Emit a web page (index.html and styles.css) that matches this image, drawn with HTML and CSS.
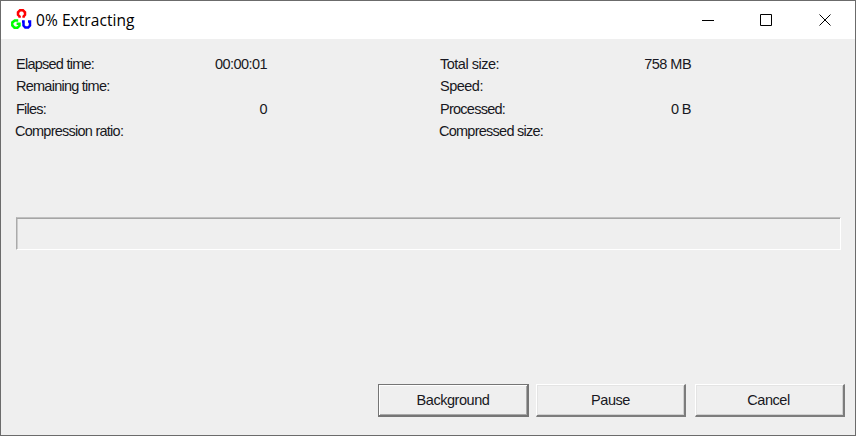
FILE: index.html
```html
<!DOCTYPE html>
<html lang="en">
<head>
<meta charset="utf-8">
<title>0% Extracting</title>
<link rel="stylesheet" href="styles.css">
</head>
<body>
<div class="window">
  <header class="titlebar">
    <svg class="logo" width="22" height="22" viewBox="0 0 22 22" fill="none" stroke-width="2.500">
      <path stroke="#f00" d="M9.600 8.800V7.400L8 5.800V3.300L10 1.300H13L15 3.300V5.800L13.600 7.400V8.800"/>
      <path stroke="#0f0" d="M8.200 11.400H4.800L2.300 13.400V16.500L4.500 18.700H7.500L9.500 16.800V14.800H6.600"/>
      <path stroke="#00f" d="M12 12.500H13.500V16.600L15.300 18.600H18.200L20 16.600V12.500H18"/>
    </svg>
    <span class="title">0% Extracting</span>
    <svg class="controls" width="130" height="13" viewBox="0 0 130 13" fill="none" stroke="#000" stroke-width="1">
      <path d="M0 6.500H12M58.500 .5H69.500V11.500H58.500Z"/>
      <path d="M117.500 .5L128.500 11.500M128.500 .5L117.500 11.500"/>
    </svg>
  </header>
  <main class="content">
    <section class="stats">
      <dl class="column">
        <div class="row"><dt>Elapsed time:</dt><dd>00:00:01</dd></div>
        <div class="row"><dt>Remaining time:</dt><dd></dd></div>
        <div class="row"><dt>Files:</dt><dd>0</dd></div>
        <div class="row"><dt class="wide">Compression ratio:</dt><dd></dd></div>
      </dl>
      <dl class="column">
        <div class="row"><dt class="loose">Total size:</dt><dd>758 MB</dd></div>
        <div class="row"><dt class="loose">Speed:</dt><dd></dd></div>
        <div class="row"><dt>Processed:</dt><dd>0 B</dd></div>
        <div class="row"><dt class="wide">Compressed size:</dt><dd></dd></div>
      </dl>
    </section>
    <div class="progress"></div>
    <footer class="actions">
      <button class="button default">Background</button>
      <button class="button">Pause</button>
      <button class="button last">Cancel</button>
    </footer>
  </main>
</div>
</body>
</html>
```
FILE: styles.css
```css
* { box-sizing: border-box; }
body { margin: 0; }
.window {
  width: 856px;
  height: 436px;
  display: flex;
  flex-direction: column;
  border: 1px solid #6b6b6b;
  background: #efefef;
  color: #181822;
  font: 14.5px/22.5px "Liberation Sans", Arial, sans-serif;
}
.titlebar {
  height: 38px;
  display: flex;
  align-items: center;
  padding: 0 23px 0 9px;
  background: #fff;
}
.title {
  margin-left: 4px;
  color: #000;
  font: 15.5px/22px "Open Sans", "Segoe UI", sans-serif;
  letter-spacing: 0.07px;
}
.controls { margin-left: auto; }
.content {
  flex: 1;
  display: flex;
  flex-direction: column;
  padding: 13.75px 10px 18px 15px;
}
.stats { display: flex; gap: 173px; }
.column { width: 251px; margin: 0; }
.row {
  display: flex;
  justify-content: space-between;
  height: 22.5px;
  letter-spacing: -0.55px;
}
.row dt { letter-spacing: -0.75px; }
.row .loose { letter-spacing: -0.5px; }
.row dd { margin: 0; }
.wide { margin-left: -1px; }
.progress {
  height: 33px;
  margin: 74.25px 4px 0 0;
  border: 1px solid #fff;
  border-top: 1px solid #c0c0c0;
  border-left: 1px solid #aaa;
  box-shadow: inset 0 1px #a5a5a5, inset 1px 0 #ccc;
}
.actions {
  display: flex;
  justify-content: flex-end;
  gap: 7px;
  margin-top: auto;
}
.button {
  width: 150px;
  height: 33px;
  padding: 0;
  border: solid;
  border-width: 1px 2px 2px 1px;
  border-color: #fff #7c7c7c #7c7c7c #fff;
  background: #efefef;
  color: inherit;
  font: inherit;
  letter-spacing: -0.45px;
  box-shadow: inset 1px 1px #e4e4e4, inset -1px -1px #d0d0d0;
}
.last { margin-left: 2px; padding-right: 2px; }
.default {
  width: 151px;
  border-width: 1px 2px 2px 1px;
  border-color: #757575;
  box-shadow: inset 1px 1px #fff, inset -1px -1px #a8a8a8;
}
```
